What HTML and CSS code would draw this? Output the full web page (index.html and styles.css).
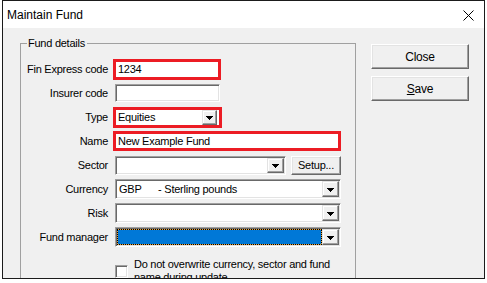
FILE: index.html
```html
<!DOCTYPE html>
<html lang="en">
<head>
    <meta charset="UTF-8">
    <title>Maintain Fund</title>
    <link rel="stylesheet" href="styles.css">
</head>
<body>
    <div class="window">
        <div class="titlebar">
            <span class="title">Maintain Fund</span>
            <svg class="close-x" width="11" height="11" viewBox="0 0 11 11">
                <path d="M0.5 0.5 L10.5 10.5 M10.5 0.5 L0.5 10.5" stroke="#000" stroke-width="1" fill="none"/>
            </svg>
        </div>
        <div class="client">
            <div class="group">
                <span class="group-title">Fund details</span>
                <div class="form">
                    <label>Fin Express code</label>
                    <div class="field hl code"><span>1234</span></div>

                    <label>Insurer code</label>
                    <div class="field insurer"></div>

                    <label>Type</label>
                    <div class="field hl type">
                        <span>Equities</span>
                        <div class="drop"><svg width="7" height="4" viewBox="0 0 7 4" shape-rendering="crispEdges"><polygon points="0,0 7,0 3.5,4" fill="#000"/></svg></div>
                    </div>

                    <label>Name</label>
                    <div class="field hl name"><span>New Example Fund</span></div>

                    <label>Sector</label>
                    <div class="pair">
                        <div class="field combo sector">
                            <span></span>
                            <div class="drop"><svg width="7" height="4" viewBox="0 0 7 4" shape-rendering="crispEdges"><polygon points="0,0 7,0 3.5,4" fill="#000"/></svg></div>
                        </div>
                        <button class="btn setup">Setup...</button>
                    </div>

                    <label>Currency</label>
                    <div class="field combo wide">
                        <span class="pre">GBP      - Sterling pounds</span>
                        <div class="drop"><svg width="7" height="4" viewBox="0 0 7 4" shape-rendering="crispEdges"><polygon points="0,0 7,0 3.5,4" fill="#000"/></svg></div>
                    </div>

                    <label>Risk</label>
                    <div class="field combo wide">
                        <span></span>
                        <div class="drop"><svg width="7" height="4" viewBox="0 0 7 4" shape-rendering="crispEdges"><polygon points="0,0 7,0 3.5,4" fill="#000"/></svg></div>
                    </div>

                    <label>Fund manager</label>
                    <div class="field combo wide focus">
                        <div class="sel"></div>
                        <div class="drop"><svg width="7" height="4" viewBox="0 0 7 4" shape-rendering="crispEdges"><polygon points="0,0 7,0 3.5,4" fill="#000"/></svg></div>
                    </div>
                </div>
                <div class="check">
                    <div class="box"></div>
                    <span class="check-text">Do not overwrite currency, sector and fund name during update</span>
                </div>
            </div>
            <div class="actions">
                <button class="btn big">Close</button>
                <button class="btn big"><u>S</u>ave</button>
            </div>
        </div>
    </div>
</body>
</html>
```

FILE: styles.css
```css
body {
    margin: 0;
    background: #fff;
    font-family: "Liberation Sans", Arial, sans-serif;
    font-size: 11px;
    color: #000;
}
.window {
    margin-left: 2px;
    width: 483px;
    height: 279px;
    box-sizing: border-box;
    border: 1px solid #1b1b1b;
    background: #f0f0f0;
    overflow: hidden;
    display: flex;
    flex-direction: column;
}
.titlebar {
    height: 27px;
    flex-shrink: 0;
    background: #fff;
    display: flex;
    align-items: center;
    justify-content: space-between;
    padding: 0 10px 0 4px;
}
.title {
    font-size: 12px;
    margin-top: 1px;
}
.close-x {
    display: block;
    margin-top: 1px;
}
.client {
    display: flex;
    align-items: flex-start;
    gap: 15px;
    padding: 15px 0 0 17px;
}
.group {
    position: relative;
    flex-shrink: 0;
    width: 336px;
    height: 260px;
    box-sizing: border-box;
    border: 1px solid #a0a0a0;
    padding-top: 13px;
}
.group-title {
    position: absolute;
    top: -8px;
    left: 6px;
    padding: 0 2px 0 1px;
    background: #f0f0f0;
    letter-spacing: -0.25px;
    line-height: 15px;
}
.form {
    display: grid;
    grid-template-columns: 88px 226px;
    grid-auto-rows: 24px;
    column-gap: 6px;
    align-items: center;
}
.form label {
    text-align: right;
    padding-right: 1px;
    letter-spacing: -0.25px;
}
.field {
    justify-self: start;
    box-sizing: border-box;
    height: 20px;
    background: #fff;
    display: flex;
    align-items: center;
    border: 1px solid;
    border-color: #a0a0a0 #fff #fff #a0a0a0;
    box-shadow: inset 1px 1px #696969, inset -1px -1px #e3e3e3;
    padding-left: 3px;
    letter-spacing: -0.25px;
}
.field span {
    flex: 1;
}
.hl {
    border: 3px solid #ec1c24;
    box-shadow: none;
    margin-left: -2px;
    padding-left: 2px;
    height: 21px;
}
.code { width: 108px; }
.insurer { width: 105px; height: 18px; }
.type { width: 109px; padding-right: 2px; }
.name { width: 228px; height: 20px; }
.sector { width: 171px; height: 19px; }
.wide { width: 226px; }
.pre { white-space: pre; }
.pair {
    display: flex;
    gap: 5px;
}
.drop {
    flex-shrink: 0;
    box-sizing: border-box;
    width: 17px;
    height: 16px;
    margin-right: 1px;
    background: #f0f0f0;
    border: 1px solid;
    border-color: #e3e3e3 #696969 #696969 #e3e3e3;
    box-shadow: inset -1px -1px #a0a0a0, inset 1px 1px #fff;
    display: flex;
    align-items: center;
    justify-content: center;
}
.drop svg {
    display: block;
    margin-top: 1px;
}
.type .drop {
    width: 15px;
    height: 15px;
    margin-right: 0;
}
.sector .drop {
    height: 15px;
}
.sel {
    flex: 1;
    align-self: stretch;
    margin: 1px 0 1px -2px;
    border: 1px dotted #000;
    background: linear-gradient(#0078d7, #0078d7) padding-box, #e8a33a border-box;
}
.btn {
    font-family: inherit;
    font-size: 11px;
    letter-spacing: -0.25px;
    color: #000;
    padding: 0;
    background: #f0f0f0;
    border: 1px solid;
    border-color: #fff #696969 #696969 #fff;
    box-shadow: inset -1px -1px #a0a0a0, inset 1px 1px #e3e3e3;
}
.setup {
    width: 50px;
    height: 19px;
}
.check {
    display: flex;
    gap: 6px;
    padding-left: 94px;
    margin-top: 9px;
}
.box {
    flex-shrink: 0;
    width: 13px;
    height: 13px;
    box-sizing: border-box;
    margin-top: 7px;
    background: #fff;
    border: 1px solid;
    border-color: #a0a0a0 #fff #fff #a0a0a0;
    box-shadow: inset 1px 1px #696969, inset -1px -1px #e3e3e3;
}
.check-text {
    width: 206px;
    line-height: 13px;
    letter-spacing: -0.25px;
}
.actions {
    display: flex;
    flex-direction: column;
    gap: 7px;
    margin-top: 1px;
}
.big {
    width: 98px;
    height: 25px;
    font-size: 12px;
}
```
